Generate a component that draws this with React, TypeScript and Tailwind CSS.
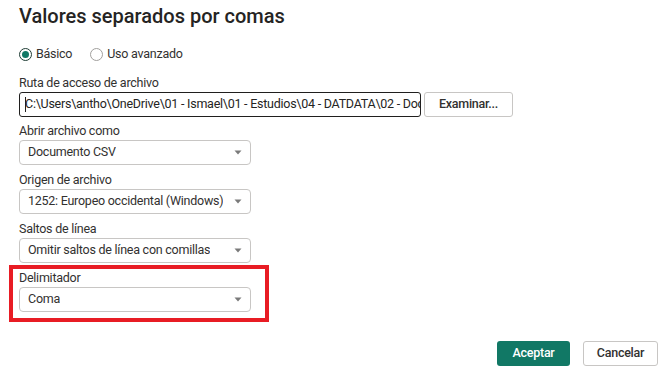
import { useState } from 'react';

const BODY = "font-['Roboto','Open_Sans',sans-serif]";
const TXT = 'text-[12.5px] tracking-[-0.25px]';

function Caret() {
  return (
    <svg width="8" height="5" viewBox="0 0 8 5" className="shrink-0">
      <path d="M0.5 0.5 L7.5 0.5 L4 4.5 Z" fill="#7a7a7a" />
    </svg>
  );
}

function SelectBox({ value }: { value: string }) {
  return (
    <div className={`flex h-[25px] w-[232px] items-center justify-between rounded-[4px] border border-[#c8c6c4] bg-white pl-[8px] pr-[8px] text-[#323130] ${TXT}`}>
      <span className="truncate">{value}</span>
      <Caret />
    </div>
  );
}

function Field({ label, value }: { label: string; value: string }) {
  return (
    <div className="flex flex-col">
      <div className={`h-[18px] leading-[18px] text-[#323130] ${TXT}`}>{label}</div>
      <SelectBox value={value} />
    </div>
  );
}

function Radio({ checked, label, onClick }: { checked: boolean; label: string; onClick: () => void }) {
  return (
    <button type="button" onClick={onClick} className={`flex items-center gap-[4px] text-[#323130] ${TXT}`}>
      <span
        className={`flex h-[13px] w-[13px] items-center justify-center rounded-full border ${
          checked ? 'border-[#1f3d35]' : 'border-[#a19f9d]'
        }`}
      >
        {checked && <span className="h-[7px] w-[7px] rounded-full bg-[#117865]" />}
      </span>
      {label}
    </button>
  );
}

export default function App() {
  const [mode, setMode] = useState<'basic' | 'advanced'>('basic');

  return (
    <div className={`h-[376px] w-[672px] overflow-hidden bg-white ${BODY}`}>
      <div className="flex flex-col px-[19px]">
        <h1 className="h-[32px] text-[20px] font-medium leading-[32px] text-[#252423]">
          Valores separados por comas
        </h1>

        {/* Mode */}
        <div className="mt-[12px] flex h-[20px] items-center gap-[18px]">
          <Radio checked={mode === 'basic'} label="Básico" onClick={() => setMode('basic')} />
          <Radio checked={mode === 'advanced'} label="Uso avanzado" onClick={() => setMode('advanced')} />
        </div>

        {/* File path */}
        <div className={`mt-[10px] h-[18px] leading-[18px] text-[#323130] ${TXT}`}>Ruta de acceso de archivo</div>
        <div className="flex items-center gap-[3px]">
          <div className={`flex h-[25px] w-[402px] shrink-0 items-center overflow-hidden whitespace-nowrap rounded-[3px] border border-[#201f1e] pl-[5px] text-[#252423] ${TXT}`}>
            <span className="mr-[-1px] h-[15px] w-px shrink-0 bg-[#201f1e]" />
            C:\Users\antho\OneDrive\01 - Ismael\01 - Estudios\04 - DATDATA\02 - Documentos
          </div>
          <button
            type="button"
            className={`flex h-[25px] w-[89px] shrink-0 items-center justify-center rounded-[3px] border border-[#c8c6c4] bg-white font-medium text-[#323130] ${TXT}`}
          >
            Examinar...
          </button>
        </div>

        <div className="mt-[5px] flex flex-col gap-[6px]">
          <Field label="Abrir archivo como" value="Documento CSV" />
          <Field label="Origen de archivo" value="1252: Europeo occidental (Windows)" />
          <Field label="Saltos de línea" value="Omitir saltos de línea con comillas" />
        </div>

        {/* Highlighted delimiter */}
        <div className="ml-[-10px] mt-[2px] w-[260px] border-4 border-[#e81c24] pb-[6px] pl-[6px]">
          <Field label="Delimitador" value="Coma" />
        </div>
      </div>

      <div className="mt-[19px] flex justify-end gap-[13px] pr-[14px]">
        <button
          type="button"
          className={`flex h-[25px] w-[73px] items-center justify-center rounded-[3px] bg-[#117865] font-medium text-white ${TXT}`}
        >
          Aceptar
        </button>
        <button
          type="button"
          className={`flex h-[25px] w-[75px] items-center justify-center rounded-[3px] border border-[#c8c6c4] bg-white font-medium text-[#323130] ${TXT}`}
        >
          Cancelar
        </button>
      </div>
    </div>
  );
}
